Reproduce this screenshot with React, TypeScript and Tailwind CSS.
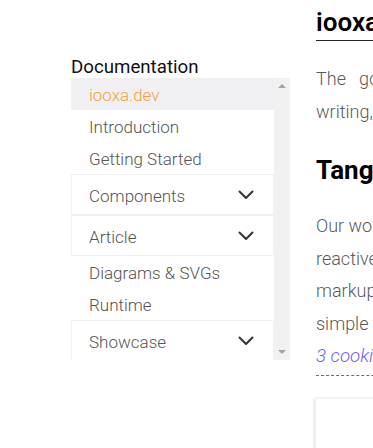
import React from "react";

function Chevron() {
  return (
    <svg width="16" height="10" viewBox="0 0 16 10" fill="none">
      <polyline points="1.5,1.5 8,8 14.5,1.5" stroke="#333" strokeWidth="2" strokeLinecap="round" strokeLinejoin="round" />
    </svg>
  );
}

function Row({ label, active }: { label: string; active?: boolean }) {
  return (
    <div
      className={
        "h-[32px] shrink-0 flex items-center pl-[18px] pt-[4px] text-[17px] font-light " +
        (active ? "bg-[#f0f0f2] text-[#f0a040]" : "text-[#555]")
      }
    >
      {label}
    </div>
  );
}

function Group({ label }: { label: string }) {
  return (
    <div className="h-[41px] shrink-0 flex items-center justify-between pl-[17px] pr-[19px] border border-[#f0f0f0] text-[17px] font-light text-[#555]">
      <span className="pt-[4px]">{label}</span>
      <Chevron />
    </div>
  );
}

export default function App() {
  return (
    <div
      className="w-[373px] h-[448px] overflow-hidden bg-white flex"
      style={{ fontFamily: "Roboto, 'Noto Sans', sans-serif" }}
    >
      <div className="ml-[71px] mt-[56px] w-[219px] shrink-0">
        <div className="text-[18.7px] leading-[22px] text-[#111]">Documentation</div>
        <div className="h-[282px] flex overflow-hidden">
          <div className="w-[203px] flex flex-col">
            <Row label="iooxa.dev" active />
            <Row label="Introduction" />
            <Row label="Getting Started" />
            <Group label="Components" />
            <Group label="Article" />
            <Row label="Diagrams & SVGs" />
            <Row label="Runtime" />
            <Group label="Showcase" />
          </div>
          <div className="w-[16px] bg-[#f1f1f1] flex flex-col items-center justify-between pt-[6px] pb-[6px]">
            <div className="w-0 h-0 border-l-[4px] border-r-[4px] border-b-[4px] border-l-transparent border-r-transparent border-b-[#a3a3a3]" />
            <div className="w-0 h-0 border-l-[4px] border-r-[4px] border-t-[4px] border-l-transparent border-r-transparent border-t-[#a3a3a3]" />
          </div>
        </div>
      </div>
      <div className="ml-[26px] w-[620px] shrink-0">
        <h1 className="mt-[7px] text-[26px] leading-[31px] font-semibold text-black pb-[2px] border-b border-[#222]">
          iooxa.dev
        </h1>
        <p className="mt-[22px] text-[18px] leading-[32.5px] font-light text-[#5a5a5a]">
          The&nbsp;&nbsp;&nbsp;goal of iooxa is to improve the way we communicate ideas in
          <br />
          writing, through interactive articles and reproducible research.
        </p>
        <h2 className="mt-[27px] text-[26px] leading-[31px] font-bold text-black">Tangible Documents</h2>
        <p className="mt-[24px] text-[18px] leading-[32.5px] font-light text-[#5a5a5a]">
          Our work focuses on creating tools that enable
          <br />
          reactive, interactive documents that can be written in
          <br />
          markup and web-components, making it
          <br />
          simple to share and explore ideas.
        </p>
        <div className="text-[18.7px] leading-[32.5px] font-light italic text-[#6a62f5] pb-[2px] border-b border-dashed border-b-[#5a5aff] w-[300px]">
          3 cookies cost $4.50 in total.
        </div>
        <div className="mt-[22px] ml-[-1px] h-[200px] w-[400px] bg-white border border-[#f4f4f4] shadow-[0_1px_3px_rgba(0,0,0,0.22)]" />
      </div>
    </div>
  );
}
